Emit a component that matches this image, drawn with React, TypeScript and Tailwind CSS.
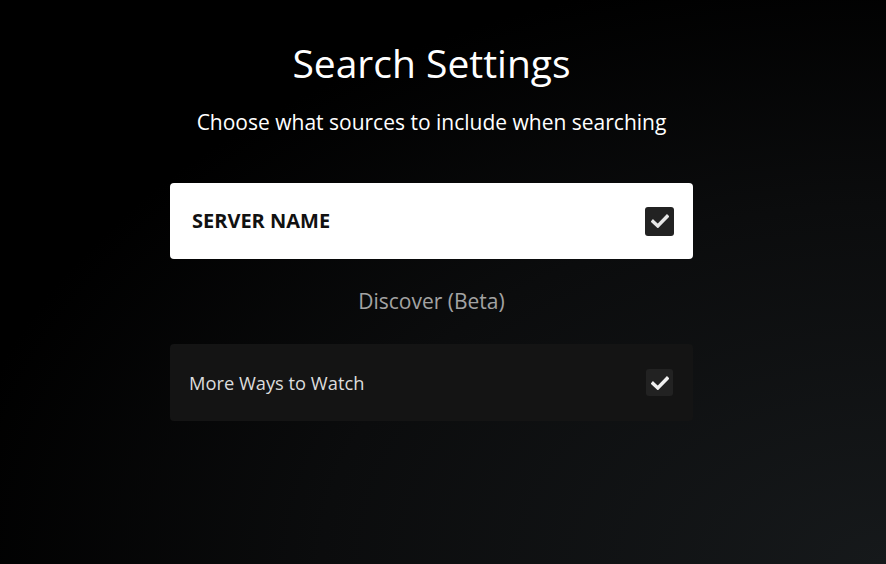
import React from "react";

function Check({ color }: { color: string }) {
  return (
    <svg width="18" height="14" viewBox="0 0 18 14" fill="none">
      <path d="M2 7.5 L6.8 12 L16 2.5" stroke={color} strokeWidth="3.4" strokeLinecap="square" strokeLinejoin="miter" />
    </svg>
  );
}

export default function App() {
  return (
    <div
      className="w-[886px] h-[564px] overflow-hidden bg-black bg-[radial-gradient(ellipse_at_100%_100%,#16191b_0%,#0b0c0d_45%,#000000_75%)]"
      style={{ fontFamily: '"Open Sans", "Noto Sans", sans-serif' }}
    >
      <div className="w-[863px] flex flex-col items-center">
        <h1 className="mt-[37px] text-[39px] leading-[52px] text-white font-normal">Search Settings</h1>
        <p className="mt-[18px] text-[21px] leading-[30px] text-white">Choose what sources to include when searching</p>

        <div className="mt-[46px] w-[523px] h-[76px] rounded-[4px] bg-white flex items-center justify-between pl-[22px] pr-[19px]">
          <span className="text-[20px] font-bold text-[#111]">SERVER NAME</span>
          <div className="w-[29px] h-[29px] rounded-[3px] bg-[#222222] flex items-center justify-center">
            <Check color="#e6e6e6" />
          </div>
        </div>

        <div className="mt-[27px] text-[21px] leading-[30px] text-[#a3a3a3]">Discover (Beta)</div>

        <div className="mt-[28px] w-[523px] h-[77px] rounded-[4px] bg-[#141414] flex items-center justify-between pl-[19px] pr-[20px]">
          <span className="text-[18.3px] text-[#dcdcdc]">More Ways to Watch</span>
          <div className="w-[27px] h-[27px] rounded-[3px] bg-[#222222] flex items-center justify-center">
            <Check color="#f0f0f0" />
          </div>
        </div>
      </div>
    </div>
  );
}
